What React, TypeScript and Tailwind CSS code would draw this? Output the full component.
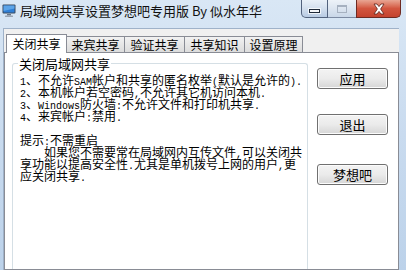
import React from "react";

// Win7 "局域网共享设置" dialog, first tab.

const cjk = "font-['Noto_Sans_CJK_SC',sans-serif]";

function Mixed({ text }: { text: string }) {
  // ASCII runs are drawn half-width like SimSun's bitmap Latin.
  const parts = text.split(/([\x21-\x7e]+)/);
  return (
    <>
      {parts.map((p, i) =>
        /^[\x21-\x7e]+$/.test(p) ? (
          <span key={i} className="font-['Liberation_Mono',monospace] text-[10px]">
            {p}
          </span>
        ) : (
          <span key={i}>{p}</span>
        ),
      )}
    </>
  );
}

function PcIcon() {
  return (
    <svg width="14" height="13" viewBox="0 0 14 13">
      <rect x="0.5" y="0.5" width="13" height="9" rx="1" fill="#3a4a5e" />
      <rect x="1.5" y="1.5" width="11" height="7" fill="#2f7fd6" />
      <path d="M1.5 1.5h11v3L1.5 7z" fill="#6fb3f0" opacity="0.7" />
      <rect x="5" y="10" width="4" height="1.5" fill="#6b7787" />
      <rect x="3" y="11.5" width="8" height="1.5" rx="0.5" fill="#9aa5b3" />
    </svg>
  );
}

function Controls() {
  return (
    <div className="absolute right-[5px] top-0 flex h-[18px]">
      <div className="flex w-[27px] items-center justify-center rounded-bl-[5px] border border-t-0 border-[#52627d] bg-gradient-to-b from-[#e9f0f8] via-[#d3dfee] to-[#b8cbe3]">
        <div className="mt-[4px] h-[4px] w-[11px] border border-[#1f2a3a] bg-[#f4f6f9] shadow-[0_0_0_1px_rgba(255,255,255,0.7)]" />
      </div>
      <div className="flex w-[28px] items-center justify-center border-b border-[#7c8aa2] bg-gradient-to-b from-[#edf2f8] via-[#dce5f0] to-[#c9d7e8]">
        <div className="h-[8px] w-[10px] border border-[#a6b1c0] border-t-2" />
      </div>
      <div className="flex w-[45px] items-center justify-center rounded-br-[5px] border border-t-0 border-[#6e2a22] bg-gradient-to-b from-[#e8a593] via-[#d2553f] to-[#c4432f]">
        <svg width="14" height="12" viewBox="0 0 14 12">
          <path
            d="M2 1h3l2 2.6L9 1h3L8.6 6 12 11H9L7 8.4 5 11H2l3.4-5z"
            fill="#fff"
            stroke="#5a1f18"
            strokeWidth="0.8"
            strokeLinejoin="round"
          />
        </svg>
      </div>
    </div>
  );
}

const tabs = ["来宾共享", "验证共享", "共享知识", "设置原理"];
const tabWidths = [58, 60, 60, 58];

const lines = [
  "1、不允许SAM帐户和共享的匿名枚举(默认是允许的).",
  "2、本机帐户若空密码,不允许其它机访问本机.",
  "3、Windows防火墙:不允许文件和打印机共享.",
  "4、来宾帐户:禁用.",
];

function Btn({ label, className }: { label: string; className: string }) {
  return (
    <div
      className={`flex h-[21px] w-[71px] items-center justify-center rounded-[3px] border border-[#707070] bg-gradient-to-b from-[#f3f3f3] via-[#ebebeb] to-[#d6d6d6] text-[13px] leading-none text-black shadow-[inset_0_0_0_1px_#fcfcfc] ${className}`}
    >
      {label}
    </div>
  );
}

export default function App() {
  return (
    <div
      className={`relative flex h-[270px] w-[406px] flex-col overflow-hidden bg-gradient-to-b from-[#d9e7f5] via-[#c9dbef] to-[#bcd2ea] ${cjk}`}
    >
      <div className="flex h-[28px] shrink-0 items-start pl-[2px] pt-[4px]">
        <PcIcon />
        <span className="ml-[4px] mt-[-2px] text-[13px] leading-[17px] text-[#111]">
          局域网共享设置梦想吧专用版 By 似水年华
        </span>
      </div>
      <Controls />

      <div className="ml-[3px] mr-[7px] flex flex-1 flex-col border-l border-t border-[#9fb2c9] bg-[#f0f0f0]">
        <div className="flex h-[23px] shrink-0 items-end pl-[2px]">
          <div className="relative z-10 mb-[-1px] flex h-[19px] w-[61px] items-center justify-center border border-b-0 border-[#898c95] bg-white text-[12px] leading-none">
            关闭共享
          </div>
          {tabs.map((t, i) => (
            <div
              key={t}
              style={{ width: tabWidths[i] }}
              className="flex h-[16px] items-center justify-center border border-b-0 border-l-0 border-[#898c95] bg-gradient-to-b from-[#f2f2f2] to-[#dcdcdc] text-[12px] leading-none"
            >
              {t}
            </div>
          ))}
        </div>

        <div className="flex flex-1 border border-[#898c95] bg-white">
          <div className="relative ml-[7px] mt-[10px] w-[296px] rounded-t-[3px] border border-b-0 border-[#d5dfe5] pl-[7px] pt-[10px] text-[12px] leading-[12px] text-black">
            <span className="absolute left-[5px] top-[-8px] bg-white px-[1px] text-[13px] leading-[15px]">
              关闭局域网共享
            </span>
            {lines.map((l) => (
              <div key={l} className="h-[12px] whitespace-nowrap">
                <Mixed text={l} />
              </div>
            ))}
            <div className="h-[12px]" />
            <div className="h-[12px] whitespace-nowrap">
              <Mixed text="提示:不需重启" />
            </div>
            <div className="h-[12px] whitespace-nowrap pl-[24px]">
              <Mixed text="如果您不需要常在局域网内互传文件,可以关闭共" />
            </div>
            <div className="h-[12px] whitespace-nowrap">
              <Mixed text="享功能以提高安全性.尤其是单机拨号上网的用户,更" />
            </div>
            <div className="h-[12px] whitespace-nowrap">
              <Mixed text="应关闭共享." />
            </div>
          </div>

          <div className="ml-[9px] flex flex-col pt-[15px]">
            <Btn label="应用" className="" />
            <Btn label="退出" className="mt-[25px]" />
            <Btn label="梦想吧" className="mt-[29px]" />
          </div>
        </div>
      </div>
    </div>
  );
}
